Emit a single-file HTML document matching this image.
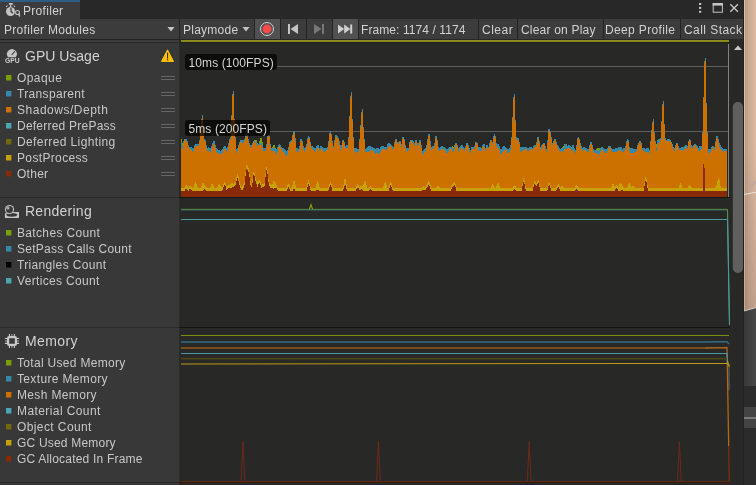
<!DOCTYPE html>
<html><head><meta charset="utf-8"><title>Profiler</title>
<style>
html,body{margin:0;padding:0;}
body{width:756px;height:485px;overflow:hidden;background:#383838;position:relative;font-family:"Liberation Sans",sans-serif;font-size:12px;color:#d2d2d2;}
div,span{position:absolute;box-sizing:border-box;white-space:nowrap;}
.t{line-height:14px;height:14px;}
#tabbar{left:0;top:0;width:744px;height:19px;background:#282828;}
#tab{left:0;top:0;width:80px;height:19px;background:#3c3c3c;border-top:2px solid #2c5d87;}
#toolbar{left:0;top:19px;width:744px;height:20px;background:#3c3c3c;}
.sep{top:19px;width:1px;height:20px;background:#232323;}
.hl{top:19px;height:20px;background:#515151;}
#left{left:0;top:40px;width:179px;height:445px;background:#383838;}
#chart{left:179px;top:39px;width:565px;height:446px;background:#282827;}
.lg{left:16.5px;color:#c8c8c8;}
.sqs{position:absolute;left:6px;width:7px;height:7px;}
.hd{left:25px;font-size:14px;line-height:16px;height:16px;color:#d2d2d2;}
.grip{left:161px;width:14px;height:4px;border-top:1px solid #646464;border-bottom:1px solid #646464;}
.lab{background:rgba(0,0,0,0.7);border-radius:3px;color:#d4d4d4;font-size:12px;line-height:19px;height:16px;padding:0 3.5px;letter-spacing:0.1px;overflow:hidden;}
#strip{left:744px;top:0;width:12px;height:485px;background:#d9b39c;}
span,svg{will-change:transform;}
</style></head><body>
<div id="tabbar"></div>
<div id="tab"></div>
<span class="t" style="left:23px;top:4px;letter-spacing:0.3px;">Profiler</span>
<svg style="position:absolute;left:5px;top:2px" width="17" height="16" viewBox="0 0 17 16">
 <circle cx="5.55" cy="9.45" r="4.55" fill="#c4c4c4"/>
 <rect x="3.85" y="1.1" width="4.1" height="1.7" rx="0.4" fill="#c4c4c4"/>
 <rect x="4.9" y="2.6" width="1.4" height="2.6" fill="#c4c4c4"/>
 <path d="M1.2 4.9L2.5 3.5M8.7 3.5L10 4.9" stroke="#c4c4c4" stroke-width="1.1"/>
 <path d="M5.9 5.6L6.1 9.4L7.7 11.2" stroke="#3c3c3c" stroke-width="1.3" fill="none"/>
 <circle cx="12.5" cy="10.5" r="2.8" fill="#3c3c3c"/>
 <path d="M13.8 12L14.7 14.4" stroke="#c4c4c4" stroke-width="1.5"/>
 <circle cx="12.5" cy="10.5" r="2" fill="#3c3c3c" stroke="#c4c4c4" stroke-width="1.1"/>
</svg>
<div id="toolbar"></div>
<div class="hl" style="left:255px;width:25px;"></div>
<div class="hl" style="left:333px;width:25px;"></div>
<span class="t" style="left:4px;top:23px;letter-spacing:0.3px;">Profiler Modules</span>
<svg style="position:absolute;left:167px;top:27px" width="9" height="5"><path d="M0.5 0h7L4 4.5z" fill="#c4c4c4"/></svg>
<div class="sep" style="left:179px;"></div>
<span class="t" style="left:182.6px;top:23px;letter-spacing:0.25px;">Playmode</span>
<svg style="position:absolute;left:242px;top:27px" width="9" height="5"><path d="M0.5 0h7L4 4.5z" fill="#c4c4c4"/></svg>
<div class="sep" style="left:254px;"></div>
<svg style="position:absolute;left:259px;top:21px" width="16" height="16"><circle cx="8" cy="8" r="6.5" fill="none" stroke="#d0d0d0" stroke-width="1"/><circle cx="8" cy="8" r="4.4" fill="#ff4848"/></svg>
<div class="sep" style="left:280px;"></div>
<svg style="position:absolute;left:287px;top:24px" width="12" height="10"><rect x="1" y="0" width="2" height="10" fill="#c4c4c4"/><path d="M11 0v10L3.5 5z" fill="#c4c4c4"/></svg>
<div class="sep" style="left:306px;"></div>
<svg style="position:absolute;left:313px;top:24px" width="12" height="10"><rect x="9" y="0" width="2" height="10" fill="#777"/><path d="M1 0v10L8.5 5z" fill="#777"/></svg>
<div class="sep" style="left:332px;"></div>
<svg style="position:absolute;left:338px;top:24px" width="16" height="10"><path d="M0 0.5v9L6.2 5z" fill="#d0d0d0"/><path d="M6.2 0.5v9L12.4 5z" fill="#d0d0d0"/><rect x="12.2" y="0.5" width="2" height="9" fill="#d0d0d0"/></svg>
<div class="sep" style="left:358px;"></div>
<span class="t" style="left:361px;top:23px;letter-spacing:0.08px;">Frame: 1174 / 1174</span>
<div class="sep" style="left:478px;"></div>
<span class="t" style="left:482px;top:23px;letter-spacing:0.5px;">Clear</span>
<div class="sep" style="left:517px;"></div>
<span class="t" style="left:520.5px;top:23px;letter-spacing:0.2px;">Clear on Play</span>
<div class="sep" style="left:603px;"></div>
<span class="t" style="left:605px;top:23px;letter-spacing:0.35px;">Deep Profile</span>
<div class="sep" style="left:680px;"></div>
<span class="t" style="left:684px;top:23px;letter-spacing:0.45px;width:60px;overflow:hidden;">Call Stacks</span>
<!-- window controls -->
<svg style="position:absolute;left:696px;top:0px" width="48" height="16">
 <rect x="3" y="3" width="2.2" height="2" fill="#c4c4c4"/><rect x="3" y="6.9" width="2.2" height="2" fill="#c4c4c4"/><rect x="3" y="10.8" width="2.2" height="2" fill="#c4c4c4"/>
 <rect x="17.2" y="3.5" width="9.2" height="8.7" fill="none" stroke="#c4c4c4" stroke-width="1"/><rect x="16.7" y="3" width="10.2" height="2.6" fill="#c4c4c4"/>
 <path d="M34.3 4.2l7.6 7.6M41.9 4.2l-7.6 7.6" stroke="#c4c4c4" stroke-width="1.4"/>
</svg>

<div id="left"></div>
<div style="left:0;top:39px;width:744px;height:1px;background:#232323;"></div>
<div style="left:0;top:40px;width:179px;height:2px;background:#3c3c3c;"></div>
<div style="left:0;top:42px;width:179px;height:1px;background:#2a2a2a;"></div>
<div style="left:0;top:197px;width:179px;height:1px;background:#2a2a2a;"></div>
<div style="left:0;top:327px;width:179px;height:1px;background:#2a2a2a;"></div>
<div style="left:0;top:482px;width:179px;height:1px;background:#2a2a2a;"></div>

<!-- GPU module -->
<svg style="position:absolute;left:5px;top:47px" width="17" height="17" viewBox="0 0 17 17">
 <path d="M3 10.2A4.9 4.9 0 1 1 10.8 10.2z" fill="#c4c4c4"/>
 <path d="M6.6 8L9.9 4.4" stroke="#383838" stroke-width="1.1"/>
 <text x="0" y="15.9" font-family="Liberation Sans, sans-serif" font-weight="bold" font-size="6.9" fill="#cfcfcf" textLength="14.6" lengthAdjust="spacingAndGlyphs">GPU</text>
</svg>
<span class="hd" style="top:48px;">GPU Usage</span>
<svg style="position:absolute;left:160px;top:48px" width="15" height="15" viewBox="0 0 15 15"><path d="M7.5 1.8L13.6 13.5H1.4z" fill="#ffc107" stroke="#ffc107" stroke-width="0.9" stroke-linejoin="round"/><rect x="7" y="4.6" width="1.1" height="6" fill="#33301c"/><rect x="6.9" y="11.2" width="1.3" height="1.2" fill="#33301c"/></svg>
<svg class="sqs" style="top:75px;"><rect x="0" y="0" width="5.4" height="5.5" fill="#7b9e06"/></svg><span class="t lg" style="top:71px;letter-spacing:0.42px;">Opaque</span><div class="grip" style="top:76px;"></div>
<svg class="sqs" style="top:91px;"><rect x="0" y="0" width="5.4" height="5.5" fill="#3588a7"/></svg><span class="t lg" style="top:87px;letter-spacing:0.33px;">Transparent</span><div class="grip" style="top:92px;"></div>
<svg class="sqs" style="top:107px;"><rect x="0" y="0" width="5.4" height="5.5" fill="#cc7100"/></svg><span class="t lg" style="top:103px;letter-spacing:0.51px;">Shadows/Depth</span><div class="grip" style="top:108px;"></div>
<svg class="sqs" style="top:123px;"><rect x="0" y="0" width="5.4" height="5.5" fill="#4ca5b2"/></svg><span class="t lg" style="top:119px;letter-spacing:0.23px;">Deferred PrePass</span><div class="grip" style="top:124px;"></div>
<svg class="sqs" style="top:139px;"><rect x="0" y="0" width="5.4" height="5.5" fill="#72680d"/></svg><span class="t lg" style="top:135px;letter-spacing:0.39px;">Deferred Lighting</span><div class="grip" style="top:140px;"></div>
<svg class="sqs" style="top:155px;"><rect x="0" y="0" width="5.4" height="5.5" fill="#c6a206"/></svg><span class="t lg" style="top:151px;letter-spacing:0.35px;">PostProcess</span><div class="grip" style="top:156px;"></div>
<svg class="sqs" style="top:171px;"><rect x="0" y="0" width="5.4" height="5.5" fill="#882907"/></svg><span class="t lg" style="top:167px;letter-spacing:0.27px;">Other</span><div class="grip" style="top:172px;"></div>

<!-- Rendering module -->
<svg style="position:absolute;left:4px;top:204px" width="17" height="17" viewBox="0 0 17 17">
 <path d="M0.9 9.2h6V8h8.1v5.4q0 .5-.5.5H1.4q-.5 0-.5-.5z" fill="#c4c4c4"/>
 <ellipse cx="7.8" cy="10.8" rx="5.4" ry="1.9" fill="#383838"/>
 <circle cx="5.5" cy="5.5" r="4.6" fill="#c4c4c4"/>
 <circle cx="5.5" cy="5.5" r="3.5" fill="#3a3a3a"/>
 <circle cx="4" cy="4.1" r="1.5" fill="#b0b0b0"/>
</svg>
<span class="hd" style="top:203px;letter-spacing:0.26px;">Rendering</span>
<svg class="sqs" style="top:230px;"><rect x="0" y="0" width="5.4" height="5.5" fill="#7b9e06"/></svg><span class="t lg" style="top:226px;letter-spacing:0.34px;">Batches Count</span>
<svg class="sqs" style="top:246px;"><rect x="0" y="0" width="5.4" height="5.5" fill="#3588a7"/></svg><span class="t lg" style="top:242px;letter-spacing:0.25px;">SetPass Calls Count</span>
<svg class="sqs" style="top:262px;"><rect x="0" y="0" width="5.4" height="5.5" fill="#000000"/></svg><span class="t lg" style="top:258px;letter-spacing:0.34px;">Triangles Count</span>
<svg class="sqs" style="top:278px;"><rect x="0" y="0" width="5.4" height="5.5" fill="#4ca5b2"/></svg><span class="t lg" style="top:274px;letter-spacing:0.33px;">Vertices Count</span>

<!-- Memory module -->
<svg style="position:absolute;left:4px;top:333px" width="17" height="17" viewBox="0 0 17 17">
 <rect x="4.1" y="4.1" width="7.8" height="7.8" rx="1" fill="none" stroke="#c8c8c8" stroke-width="2.2"/>
 <path d="M5.45 1v2.2M10.4 1v2.2M5.45 12.8v2.2M10.4 12.8v2.2M0.9 5.5h2.2M0.9 10.4h2.2M12.9 5.5h2.2M12.9 10.4h2.2" stroke="#c8c8c8" stroke-width="1.1"/>
 <path d="M7.9 1.1v2M7.9 12.9v2M1 7.9h2M13 7.9h2" stroke="#858585" stroke-width="1.5"/>
</svg>
<span class="hd" style="top:333px;letter-spacing:0.4px;">Memory</span>
<svg class="sqs" style="top:360px;"><rect x="0" y="0" width="5.4" height="5.5" fill="#7b9e06"/></svg><span class="t lg" style="top:356px;letter-spacing:0.31px;">Total Used Memory</span>
<svg class="sqs" style="top:376px;"><rect x="0" y="0" width="5.4" height="5.5" fill="#3588a7"/></svg><span class="t lg" style="top:372px;letter-spacing:0.35px;">Texture Memory</span>
<svg class="sqs" style="top:392px;"><rect x="0" y="0" width="5.4" height="5.5" fill="#cc7100"/></svg><span class="t lg" style="top:388px;letter-spacing:0.35px;">Mesh Memory</span>
<svg class="sqs" style="top:408px;"><rect x="0" y="0" width="5.4" height="5.5" fill="#4ca5b2"/></svg><span class="t lg" style="top:404px;letter-spacing:0.41px;">Material Count</span>
<svg class="sqs" style="top:424px;"><rect x="0" y="0" width="5.4" height="5.5" fill="#72680d"/></svg><span class="t lg" style="top:420px;letter-spacing:0.4px;">Object Count</span>
<svg class="sqs" style="top:440px;"><rect x="0" y="0" width="5.4" height="5.5" fill="#c6a206"/></svg><span class="t lg" style="top:436px;letter-spacing:0.2px;">GC Used Memory</span>
<svg class="sqs" style="top:456px;"><rect x="0" y="0" width="5.4" height="5.5" fill="#882907"/></svg><span class="t lg" style="top:452px;letter-spacing:0.2px;">GC Allocated In Frame</span>

<div id="chart"></div>
<svg style="position:absolute;left:0;top:0" width="756" height="485" shape-rendering="crispEdges">
 <rect x="179" y="39" width="1" height="446" fill="#2b2b2a"/>
 <rect x="181" y="40" width="548" height="2" fill="#8c8c1c"/>
 <rect x="180" y="42" width="550" height="1" fill="#1e1e1e"/>
 <rect x="277" y="66" width="452" height="1" fill="#5e5e5e"/>
 <rect x="270" y="131" width="459" height="1" fill="#5e5e5e"/>
<polygon fill="#7b9e06" points="181,197 181,139.3 182,139.3 182,143.3 183,143.3 183,140.8 184,140.8 184,138.5 185,138.5 185,138.6 186,138.6 186,139.4 187,139.4 187,141 188,141 188,144.8 189,144.8 189,146.8 190,146.8 190,146.8 191,146.8 191,147.3 192,147.3 192,148.3 193,148.3 193,147.9 194,147.9 194,145 195,145 195,143.9 196,143.9 196,143.8 197,143.8 197,143.8 198,143.8 198,144.3 199,144.3 199,140.3 200,140.3 200,128.5 201,128.5 201,118.9 202,118.9 202,115.4 203,115.4 203,130.5 204,130.5 204,138.9 205,138.9 205,139.7 206,139.7 206,145 207,145 207,147.5 208,147.5 208,147.4 209,147.4 209,147.9 210,147.9 210,148.1 211,148.1 211,146.1 212,146.1 212,142.7 213,142.7 213,140.8 214,140.8 214,140.8 215,140.8 215,144.7 216,144.7 216,148.4 217,148.4 217,149 218,149 218,149.6 219,149.6 219,150.2 220,150.2 220,150.7 221,150.7 221,150.2 222,150.2 222,148.7 223,148.7 223,146.6 224,146.6 224,145.6 225,145.6 225,145.6 226,145.6 226,147.9 227,147.9 227,147.1 228,147.1 228,143.1 229,143.1 229,138.9 230,138.9 230,136.9 231,136.9 231,115 232,115 232,94.4 233,94.4 233,90.9 234,90.9 234,118.7 235,118.7 235,136.9 236,136.9 236,148.6 237,148.6 237,147.6 238,147.6 238,144.8 239,144.8 239,142.3 240,142.3 240,140 241,140 241,139.9 242,139.9 242,139.8 243,139.8 243,139.8 244,139.8 244,139.2 245,139.2 245,135.3 246,135.3 246,133.9 247,133.9 247,134.5 248,134.5 248,139.3 249,139.3 249,143.1 250,143.1 250,144.8 251,144.8 251,144.8 252,144.8 252,142.5 253,142.5 253,140.7 254,140.7 254,139.9 255,139.9 255,139.5 256,139.5 256,139.5 257,139.5 257,143.3 258,143.3 258,143.7 259,143.7 259,141 260,141 260,138.3 261,138.3 261,138.3 262,138.3 262,141.6 263,141.6 263,147.7 264,147.7 264,148 265,148 265,148 266,148 266,143.9 267,143.9 267,135.6 268,135.6 268,133.6 269,133.6 269,135.6 270,135.6 270,143.8 271,143.8 271,148 272,148 272,146.5 273,146.5 273,145.4 274,145.4 274,145.4 275,145.4 275,147.7 276,147.7 276,149.1 277,149.1 277,147.1 278,147.1 278,144.6 279,144.6 279,144.1 280,144.1 280,144.7 281,144.7 281,146.5 282,146.5 282,147.7 283,147.7 283,148.4 284,148.4 284,149.3 285,149.3 285,150.2 286,150.2 286,151 287,151 287,150.1 288,150.1 288,146.7 289,146.7 289,142.4 290,142.4 290,141.1 291,141.1 291,139.9 292,139.9 292,135 293,135 293,131.3 294,131.3 294,131.3 295,131.3 295,138.3 296,138.3 296,147.8 297,147.8 297,148.4 298,148.4 298,148.6 299,148.6 299,145.6 300,145.6 300,139.3 301,139.3 301,139 302,139 302,141.2 303,141.2 303,146.2 304,146.2 304,148.4 305,148.4 305,147 306,147 306,143.5 307,143.5 307,137.9 308,137.9 308,136 309,136 309,136.9 310,136.9 310,142.4 311,142.4 311,146.1 312,146.1 312,146.1 313,146.1 313,146.8 314,146.8 314,148.2 315,148.2 315,147.8 316,147.8 316,146.1 317,146.1 317,145.3 318,145.3 318,145.4 319,145.4 319,147.5 320,147.5 320,146.2 321,146.2 321,146 322,146 322,146.7 323,146.7 323,148.3 324,148.3 324,147.9 325,147.9 325,147.9 326,147.9 326,147.5 327,147.5 327,146.5 328,146.5 328,141.2 329,141.2 329,133.1 330,133.1 330,131.4 331,131.4 331,133.6 332,133.6 332,141.1 333,141.1 333,146 334,146 334,140.1 335,140.1 335,135.1 336,135.1 336,135.1 337,135.1 337,136.3 338,136.3 338,137.8 339,137.8 339,141.3 340,141.3 340,144.6 341,144.6 341,144.9 342,144.9 342,140.1 343,140.1 343,140.1 344,140.1 344,142 345,142 345,145.6 346,145.6 346,145 347,145 347,145 348,145 348,137.1 349,137.1 349,115.8 350,115.8 350,95.9 351,95.9 351,92.4 352,92.4 352,119.4 353,119.4 353,137.1 354,137.1 354,148 355,148 355,148.1 356,148.1 356,148.2 357,148.2 357,148.6 358,148.6 358,149.2 359,149.2 359,139.4 360,139.4 360,124.9 361,124.9 361,112.4 362,112.4 362,108.9 363,108.9 363,127.4 364,127.4 364,139.4 365,139.4 365,148.9 366,148.9 366,148.3 367,148.3 367,146.7 368,146.7 368,146 369,146 369,146 370,146 370,146.4 371,146.4 371,146.8 372,146.8 372,147.1 373,147.1 373,147.6 374,147.6 374,148.3 375,148.3 375,148.9 376,148.9 376,148.3 377,148.3 377,147.7 378,147.7 378,147.7 379,147.7 379,148.8 380,148.8 380,146.9 381,146.9 381,146.4 382,146.4 382,146.3 383,146.3 383,146.3 384,146.3 384,146.5 385,146.5 385,147.1 386,147.1 386,147.1 387,147.1 387,144.3 388,144.3 388,142.8 389,142.8 389,142.8 390,142.8 390,143.9 391,143.9 391,145 392,145 392,146.2 393,146.2 393,146.8 394,146.8 394,142.3 395,142.3 395,138.5 396,138.5 396,138.5 397,138.5 397,141.5 398,141.5 398,142.3 399,142.3 399,140.7 400,140.7 400,140.8 401,140.8 401,144 402,144 402,137.3 403,137.3 403,136.5 404,136.5 404,138.8 405,138.8 405,144.9 406,144.9 406,147.9 407,147.9 407,148.4 408,148.4 408,147.5 409,147.5 409,142 410,142 410,139.7 411,139.7 411,139.7 412,139.7 412,140.1 413,140.1 413,141.1 414,141.1 414,142.7 415,142.7 415,139.5 416,139.5 416,139.5 417,139.5 417,142.9 418,142.9 418,142.5 419,142.5 419,139.5 420,139.5 420,139.5 421,139.5 421,145.4 422,145.4 422,150.6 423,150.6 423,149.9 424,149.9 424,148.6 425,148.6 425,147.5 426,147.5 426,145.4 427,145.4 427,138.7 428,138.7 428,134.4 429,134.4 429,134.4 430,134.4 430,141.4 431,141.4 431,146.5 432,146.5 432,145.9 433,145.9 433,146.4 434,146.4 434,143.2 435,143.2 435,136.3 436,136.3 436,136.3 437,136.3 437,140.2 438,140.2 438,147 439,147 439,148.2 440,148.2 440,146.9 441,146.9 441,146.4 442,146.4 442,146.4 443,146.4 443,146.6 444,146.6 444,147.1 445,147.1 445,148.4 446,148.4 446,149.4 447,149.4 447,149.1 448,149.1 448,148.2 449,148.2 449,147.4 450,147.4 450,146.8 451,146.8 451,146.5 452,146.5 452,146.4 453,146.4 453,146.5 454,146.5 454,145.3 455,145.3 455,142.7 456,142.7 456,142.7 457,142.7 457,144.6 458,144.6 458,148.2 459,148.2 459,147.3 460,147.3 460,145.9 461,145.9 461,145.3 462,145.3 462,145.4 463,145.4 463,146.6 464,146.6 464,147.6 465,147.6 465,145.8 466,145.8 466,143.4 467,143.4 467,143.4 468,143.4 468,145.1 469,145.1 469,148.2 470,148.2 470,149.5 471,149.5 471,147.4 472,147.4 472,146.6 473,146.6 473,146.7 474,146.7 474,145.9 475,145.9 475,141.7 476,141.7 476,141.6 477,141.6 477,143.3 478,143.3 478,146.9 479,146.9 479,146.7 480,146.7 480,146.7 481,146.7 481,148.1 482,148.1 482,144.7 483,144.7 483,143.6 484,143.6 484,144.2 485,144.2 485,147.7 486,147.7 486,145.1 487,145.1 487,145.1 488,145.1 488,146.5 489,146.5 489,143 490,143 490,139.6 491,139.6 491,139.6 492,139.6 492,142.2 493,142.2 493,135.7 494,135.7 494,133.9 495,133.9 495,135.7 496,135.7 496,143.1 497,143.1 497,144.4 498,144.4 498,144.4 499,144.4 499,145.9 500,145.9 500,148.5 501,148.5 501,149 502,149 502,146.9 503,146.9 503,146.1 504,146.1 504,146.2 505,146.2 505,146.9 506,146.9 506,147.8 507,147.8 507,149.1 508,149.1 508,149.4 509,149.4 509,147.6 510,147.6 510,145.4 511,145.4 511,137.3 512,137.3 512,116.6 513,116.6 513,97.4 514,97.4 514,93.9 515,93.9 515,120.2 516,120.2 516,137.3 517,137.3 517,138.4 518,138.4 518,138.4 519,138.4 519,141.5 520,141.5 520,147.2 521,147.2 521,146.7 522,146.7 522,146.7 523,146.7 523,147 524,147 524,146.7 525,146.7 525,146.6 526,146.6 526,146.8 527,146.8 527,147.8 528,147.8 528,147.9 529,147.9 529,147.3 530,147.3 530,146.8 531,146.8 531,146.8 532,146.8 532,147.6 533,147.6 533,145.5 534,145.5 534,144.7 535,144.7 535,144.8 536,144.8 536,142.4 537,142.4 537,137.4 538,137.4 538,137.4 539,137.4 539,140.5 540,140.5 540,146.6 541,146.6 541,145.3 542,145.3 542,143.7 543,143.7 543,142.9 544,142.9 544,143 545,143 545,146.2 546,146.2 546,148.9 547,148.9 547,139.7 548,139.7 548,129 549,129 549,129 550,129 550,132 551,132 551,137.4 552,137.4 552,142.8 553,142.8 553,141.1 554,141.1 554,138.9 555,138.9 555,139.1 556,139.1 556,142.3 557,142.3 557,145 558,145 558,146.3 559,146.3 559,147.8 560,147.8 560,148.8 561,148.8 561,147.8 562,147.8 562,146.9 563,146.9 563,145.7 564,145.7 564,144.2 565,144.2 565,143.7 566,143.7 566,143.9 567,143.9 567,145.5 568,145.5 568,145.4 569,145.4 569,145.4 570,145.4 570,146.4 571,146.4 571,146.6 572,146.6 572,145.4 573,145.4 573,145.4 574,145.4 574,147.6 575,147.6 575,150 576,150 576,144.8 577,144.8 577,137.6 578,137.6 578,136.8 579,136.8 579,138.5 580,138.5 580,143 581,143 581,146.3 582,146.3 582,147.9 583,147.9 583,147.3 584,147.3 584,147.3 585,147.3 585,147.7 586,147.7 586,148.2 587,148.2 587,148.9 588,148.9 588,148.6 589,148.6 589,145.3 590,145.3 590,142.3 591,142.3 591,142.3 592,142.3 592,144.8 593,144.8 593,148.8 594,148.8 594,149.8 595,149.8 595,150 596,150 596,149.3 597,149.3 597,148 598,148 598,147.8 599,147.8 599,148.2 600,148.2 600,148.1 601,148.1 601,146.5 602,146.5 602,146.5 603,146.5 603,147.6 604,147.6 604,149.2 605,149.2 605,149.4 606,149.4 606,149.1 607,149.1 607,147.7 608,147.7 608,145.8 609,145.8 609,145.6 610,145.6 610,146.2 611,146.2 611,147.7 612,147.7 612,148.5 613,148.5 613,148.8 614,148.8 614,148.9 615,148.9 615,148.2 616,148.2 616,147.9 617,147.9 617,147.9 618,147.9 618,147.4 619,147.4 619,146.6 620,146.6 620,146.6 621,146.6 621,147.4 622,147.4 622,148.8 623,148.8 623,148.3 624,148.3 624,148.3 625,148.3 625,145.7 626,145.7 626,140.5 627,140.5 627,138.9 628,138.9 628,140.1 629,140.1 629,146.8 630,146.8 630,147.8 631,147.8 631,147.8 632,147.8 632,148.4 633,148.4 633,149.4 634,149.4 634,149.2 635,149.2 635,149.2 636,149.2 636,148.5 637,148.5 637,145 638,145 638,142.8 639,142.8 639,141.2 640,141.2 640,141 641,141 641,142.9 642,142.9 642,147.5 643,147.5 643,148.2 644,148.2 644,148.2 645,148.2 645,148.5 646,148.5 646,148 647,148 647,147.8 648,147.8 648,148 649,148 649,149.8 650,149.8 650,140.8 651,140.8 651,130.4 652,130.4 652,122.4 653,122.4 653,118.9 654,118.9 654,132.2 655,132.2 655,140.8 656,140.8 656,144.3 657,144.3 657,140.2 658,140.2 658,139 659,139 659,139.2 660,139.2 660,138.3 661,138.3 661,120.5 662,120.5 662,104.4 663,104.4 663,100.9 664,100.9 664,123.5 665,123.5 665,138.3 666,138.3 666,139.5 667,139.5 667,139.4 668,139.4 668,139.3 669,139.3 669,139.2 670,139.2 670,139.7 671,139.7 671,141.7 672,141.7 672,144.2 673,144.2 673,147.3 674,147.3 674,147.6 675,147.6 675,144.7 676,144.7 676,143.2 677,143.2 677,143.2 678,143.2 678,145.5 679,145.5 679,147.6 680,147.6 680,147.5 681,147.5 681,147.1 682,147.1 682,147.1 683,147.1 683,147.2 684,147.2 684,146.1 685,146.1 685,145.4 686,145.4 686,145.4 687,145.4 687,146.2 688,146.2 688,140.6 689,140.6 689,139 690,139 690,140 691,140 691,145.1 692,145.1 692,146.1 693,146.1 693,144.8 694,144.8 694,143.7 695,143.7 695,143.7 696,143.7 696,144.8 697,144.8 697,146.2 698,146.2 698,147.5 699,147.5 699,146.4 700,146.4 700,146.1 701,146.1 701,146.1 702,146.1 702,132.3 703,132.3 703,96.8 704,96.8 704,61.4 705,61.4 705,57.9 706,57.9 706,102.9 707,102.9 707,132.3 708,132.3 708,149.3 709,149.3 709,149.2 710,149.2 710,149 711,149 711,147.4 712,147.4 712,145.6 713,145.6 713,145.6 714,145.6 714,146.6 715,146.6 715,140.6 716,140.6 716,136.1 717,136.1 717,136.1 718,136.1 718,139.3 719,139.3 719,142.9 720,142.9 720,144.9 721,144.9 721,146.8 722,146.8 722,148.2 723,148.2 723,148.7 724,148.7 724,148.6 725,148.6 725,148.5 726,148.5 726,148.5 727,148.5 727,197"/>
<polygon fill="#3588a7" points="181,197 181,143 182,143 182,145.5 183,145.5 183,140.8 184,140.8 184,138.5 185,138.5 185,138.6 186,138.6 186,139.4 187,139.4 187,141 188,141 188,144.8 189,144.8 189,146.8 190,146.8 190,146.8 191,146.8 191,147.3 192,147.3 192,148.3 193,148.3 193,147.9 194,147.9 194,145 195,145 195,143.9 196,143.9 196,143.8 197,143.8 197,143.8 198,143.8 198,144.3 199,144.3 199,140.3 200,140.3 200,128.5 201,128.5 201,118.9 202,118.9 202,115.4 203,115.4 203,130.5 204,130.5 204,138.9 205,138.9 205,139.7 206,139.7 206,145 207,145 207,147.5 208,147.5 208,147.4 209,147.4 209,147.9 210,147.9 210,148.1 211,148.1 211,146.1 212,146.1 212,142.7 213,142.7 213,140.8 214,140.8 214,140.8 215,140.8 215,144.7 216,144.7 216,148.4 217,148.4 217,149 218,149 218,149.6 219,149.6 219,150.2 220,150.2 220,150.7 221,150.7 221,150.2 222,150.2 222,148.7 223,148.7 223,146.6 224,146.6 224,145.6 225,145.6 225,145.6 226,145.6 226,147.9 227,147.9 227,147.1 228,147.1 228,143.1 229,143.1 229,138.9 230,138.9 230,136.9 231,136.9 231,115 232,115 232,94.4 233,94.4 233,90.9 234,90.9 234,118.7 235,118.7 235,136.9 236,136.9 236,148.6 237,148.6 237,147.6 238,147.6 238,144.8 239,144.8 239,142.3 240,142.3 240,140 241,140 241,139.9 242,139.9 242,139.8 243,139.8 243,139.8 244,139.8 244,139.2 245,139.2 245,135.3 246,135.3 246,133.9 247,133.9 247,134.5 248,134.5 248,139.3 249,139.3 249,143.1 250,143.1 250,144.8 251,144.8 251,144.8 252,144.8 252,142.5 253,142.5 253,141 254,141 254,141 255,141 255,141.5 256,141.5 256,142.1 257,142.1 257,144.4 258,144.4 258,143.7 259,143.7 259,143 260,143 260,142.5 261,142.5 261,142.5 262,142.5 262,144.5 263,144.5 263,148.3 264,148.3 264,148 265,148 265,148 266,148 266,143.9 267,143.9 267,135.6 268,135.6 268,133.6 269,133.6 269,135.6 270,135.6 270,143.8 271,143.8 271,148.1 272,148.1 272,147.8 273,147.8 273,147.7 274,147.7 274,147.7 275,147.7 275,148.9 276,148.9 276,149.1 277,149.1 277,147.1 278,147.1 278,144.6 279,144.6 279,144.1 280,144.1 280,144.7 281,144.7 281,146.5 282,146.5 282,147.7 283,147.7 283,148.4 284,148.4 284,149.3 285,149.3 285,150.2 286,150.2 286,151 287,151 287,150.1 288,150.1 288,146.7 289,146.7 289,142.4 290,142.4 290,141.1 291,141.1 291,139.9 292,139.9 292,135 293,135 293,131.3 294,131.3 294,131.3 295,131.3 295,138.3 296,138.3 296,147.8 297,147.8 297,148.4 298,148.4 298,148.6 299,148.6 299,145.6 300,145.6 300,139.3 301,139.3 301,139 302,139 302,141.2 303,141.2 303,146.2 304,146.2 304,148.4 305,148.4 305,147 306,147 306,143.5 307,143.5 307,137.9 308,137.9 308,136 309,136 309,136.9 310,136.9 310,142.4 311,142.4 311,146.1 312,146.1 312,146.1 313,146.1 313,146.8 314,146.8 314,148.2 315,148.2 315,147.8 316,147.8 316,146.1 317,146.1 317,145.3 318,145.3 318,145.4 319,145.4 319,147.5 320,147.5 320,146.2 321,146.2 321,146 322,146 322,146.7 323,146.7 323,148.3 324,148.3 324,147.9 325,147.9 325,147.9 326,147.9 326,147.5 327,147.5 327,146.5 328,146.5 328,141.2 329,141.2 329,133.1 330,133.1 330,131.4 331,131.4 331,133.6 332,133.6 332,141.1 333,141.1 333,146 334,146 334,140.1 335,140.1 335,135.1 336,135.1 336,135.1 337,135.1 337,136.3 338,136.3 338,137.8 339,137.8 339,141.3 340,141.3 340,144.6 341,144.6 341,144.9 342,144.9 342,140.1 343,140.1 343,140.1 344,140.1 344,142 345,142 345,145.6 346,145.6 346,145 347,145 347,145 348,145 348,137.1 349,137.1 349,115.8 350,115.8 350,95.9 351,95.9 351,92.4 352,92.4 352,119.4 353,119.4 353,137.1 354,137.1 354,148 355,148 355,148.1 356,148.1 356,148.2 357,148.2 357,148.6 358,148.6 358,149.2 359,149.2 359,139.4 360,139.4 360,124.9 361,124.9 361,112.4 362,112.4 362,108.9 363,108.9 363,127.4 364,127.4 364,139.4 365,139.4 365,148.9 366,148.9 366,148.3 367,148.3 367,146.7 368,146.7 368,146 369,146 369,146 370,146 370,146.4 371,146.4 371,146.8 372,146.8 372,147.1 373,147.1 373,147.6 374,147.6 374,148.3 375,148.3 375,148.9 376,148.9 376,148.3 377,148.3 377,147.7 378,147.7 378,147.7 379,147.7 379,148.8 380,148.8 380,146.9 381,146.9 381,146.4 382,146.4 382,146.3 383,146.3 383,146.3 384,146.3 384,146.5 385,146.5 385,147.1 386,147.1 386,147.1 387,147.1 387,144.3 388,144.3 388,142.8 389,142.8 389,142.8 390,142.8 390,143.9 391,143.9 391,145 392,145 392,146.2 393,146.2 393,146.8 394,146.8 394,142.3 395,142.3 395,138.5 396,138.5 396,138.5 397,138.5 397,141.5 398,141.5 398,142.3 399,142.3 399,140.7 400,140.7 400,140.8 401,140.8 401,144 402,144 402,137.3 403,137.3 403,136.5 404,136.5 404,138.8 405,138.8 405,144.9 406,144.9 406,147.9 407,147.9 407,148.4 408,148.4 408,147.5 409,147.5 409,142 410,142 410,139.7 411,139.7 411,139.7 412,139.7 412,140.1 413,140.1 413,141.1 414,141.1 414,142.7 415,142.7 415,139.5 416,139.5 416,139.5 417,139.5 417,142.9 418,142.9 418,142.5 419,142.5 419,139.5 420,139.5 420,139.5 421,139.5 421,145.4 422,145.4 422,150.6 423,150.6 423,149.9 424,149.9 424,148.6 425,148.6 425,147.5 426,147.5 426,145.4 427,145.4 427,138.7 428,138.7 428,134.4 429,134.4 429,134.4 430,134.4 430,141.4 431,141.4 431,146.5 432,146.5 432,145.9 433,145.9 433,146.4 434,146.4 434,143.2 435,143.2 435,136.3 436,136.3 436,136.3 437,136.3 437,140.2 438,140.2 438,147 439,147 439,148.2 440,148.2 440,146.9 441,146.9 441,146.4 442,146.4 442,146.4 443,146.4 443,146.6 444,146.6 444,147.1 445,147.1 445,148.4 446,148.4 446,149.4 447,149.4 447,149.1 448,149.1 448,148.2 449,148.2 449,147.4 450,147.4 450,147 451,147 451,147 452,147 452,148.7 453,148.7 453,147.7 454,147.7 454,145.3 455,145.3 455,142.7 456,142.7 456,142.7 457,142.7 457,144.6 458,144.6 458,148.2 459,148.2 459,147.3 460,147.3 460,145.9 461,145.9 461,145.3 462,145.3 462,145.4 463,145.4 463,146.6 464,146.6 464,147.6 465,147.6 465,145.8 466,145.8 466,143.4 467,143.4 467,143.4 468,143.4 468,145.1 469,145.1 469,148.2 470,148.2 470,149.5 471,149.5 471,147.4 472,147.4 472,146.6 473,146.6 473,146.7 474,146.7 474,145.9 475,145.9 475,141.7 476,141.7 476,141.6 477,141.6 477,143.3 478,143.3 478,146.9 479,146.9 479,146.7 480,146.7 480,146.7 481,146.7 481,148.1 482,148.1 482,144.7 483,144.7 483,143.6 484,143.6 484,144.2 485,144.2 485,147.7 486,147.7 486,145.1 487,145.1 487,145.1 488,145.1 488,146.5 489,146.5 489,143 490,143 490,139.6 491,139.6 491,139.6 492,139.6 492,142.2 493,142.2 493,135.7 494,135.7 494,133.9 495,133.9 495,135.7 496,135.7 496,143.1 497,143.1 497,144.4 498,144.4 498,144.4 499,144.4 499,145.9 500,145.9 500,148.5 501,148.5 501,149 502,149 502,146.9 503,146.9 503,146.1 504,146.1 504,146.2 505,146.2 505,146.9 506,146.9 506,147.8 507,147.8 507,149.1 508,149.1 508,149.4 509,149.4 509,147.6 510,147.6 510,145.4 511,145.4 511,137.3 512,137.3 512,116.6 513,116.6 513,97.4 514,97.4 514,93.9 515,93.9 515,120.2 516,120.2 516,137.3 517,137.3 517,138.4 518,138.4 518,138.4 519,138.4 519,141.5 520,141.5 520,147.2 521,147.2 521,146.7 522,146.7 522,146.7 523,146.7 523,147 524,147 524,146.7 525,146.7 525,146.6 526,146.6 526,146.8 527,146.8 527,147.8 528,147.8 528,147.9 529,147.9 529,147.3 530,147.3 530,146.8 531,146.8 531,146.8 532,146.8 532,147.6 533,147.6 533,145.5 534,145.5 534,144.7 535,144.7 535,144.8 536,144.8 536,142.4 537,142.4 537,137.4 538,137.4 538,137.4 539,137.4 539,140.5 540,140.5 540,146.6 541,146.6 541,145.3 542,145.3 542,143.7 543,143.7 543,142.9 544,142.9 544,143 545,143 545,146.2 546,146.2 546,148.9 547,148.9 547,139.7 548,139.7 548,129 549,129 549,129 550,129 550,132 551,132 551,137.4 552,137.4 552,142.8 553,142.8 553,141.1 554,141.1 554,138.9 555,138.9 555,139.1 556,139.1 556,142.3 557,142.3 557,145 558,145 558,146.3 559,146.3 559,147.8 560,147.8 560,148.8 561,148.8 561,148 562,148 562,148 563,148 563,147.6 564,147.6 564,144.7 565,144.7 565,143.7 566,143.7 566,143.9 567,143.9 567,145.5 568,145.5 568,145.4 569,145.4 569,145.4 570,145.4 570,146.4 571,146.4 571,146.6 572,146.6 572,145.4 573,145.4 573,145.4 574,145.4 574,147.6 575,147.6 575,150 576,150 576,144.8 577,144.8 577,137.6 578,137.6 578,136.8 579,136.8 579,138.5 580,138.5 580,143 581,143 581,146.3 582,146.3 582,147.9 583,147.9 583,147.3 584,147.3 584,147.3 585,147.3 585,147.7 586,147.7 586,148.2 587,148.2 587,148.9 588,148.9 588,148.6 589,148.6 589,145.3 590,145.3 590,142.3 591,142.3 591,142.3 592,142.3 592,144.8 593,144.8 593,148.8 594,148.8 594,149.8 595,149.8 595,150 596,150 596,150.1 597,150.1 597,150.2 598,150.2 598,150.6 599,150.6 599,150 600,150 600,148.1 601,148.1 601,146.5 602,146.5 602,146.5 603,146.5 603,147.6 604,147.6 604,149.2 605,149.2 605,149.4 606,149.4 606,149.1 607,149.1 607,147.7 608,147.7 608,145.8 609,145.8 609,145.6 610,145.6 610,146.2 611,146.2 611,147.7 612,147.7 612,148.5 613,148.5 613,148.8 614,148.8 614,148.9 615,148.9 615,148.2 616,148.2 616,147.9 617,147.9 617,147.9 618,147.9 618,147.4 619,147.4 619,146.6 620,146.6 620,146.6 621,146.6 621,147.4 622,147.4 622,148.8 623,148.8 623,148.3 624,148.3 624,148.3 625,148.3 625,145.7 626,145.7 626,140.5 627,140.5 627,138.9 628,138.9 628,140.1 629,140.1 629,146.8 630,146.8 630,147.8 631,147.8 631,147.8 632,147.8 632,148.4 633,148.4 633,149.4 634,149.4 634,149.2 635,149.2 635,149.2 636,149.2 636,148.5 637,148.5 637,145 638,145 638,142.8 639,142.8 639,141.2 640,141.2 640,141 641,141 641,142.9 642,142.9 642,147.5 643,147.5 643,148.2 644,148.2 644,148.2 645,148.2 645,148.5 646,148.5 646,148 647,148 647,147.8 648,147.8 648,148 649,148 649,149.8 650,149.8 650,140.8 651,140.8 651,130.4 652,130.4 652,122.4 653,122.4 653,118.9 654,118.9 654,132.2 655,132.2 655,140.8 656,140.8 656,146.6 657,146.6 657,140.8 658,140.8 658,139 659,139 659,139.2 660,139.2 660,138.3 661,138.3 661,120.5 662,120.5 662,104.4 663,104.4 663,100.9 664,100.9 664,123.5 665,123.5 665,138.3 666,138.3 666,139.5 667,139.5 667,139.4 668,139.4 668,139.3 669,139.3 669,139.2 670,139.2 670,139.7 671,139.7 671,141.7 672,141.7 672,144.2 673,144.2 673,147.3 674,147.3 674,147.6 675,147.6 675,144.7 676,144.7 676,143.2 677,143.2 677,143.2 678,143.2 678,145.5 679,145.5 679,147.6 680,147.6 680,147.5 681,147.5 681,147.1 682,147.1 682,147.1 683,147.1 683,147.2 684,147.2 684,146.1 685,146.1 685,145.4 686,145.4 686,145.4 687,145.4 687,146.2 688,146.2 688,140.6 689,140.6 689,139 690,139 690,140 691,140 691,145.1 692,145.1 692,146.1 693,146.1 693,144.8 694,144.8 694,143.7 695,143.7 695,143.7 696,143.7 696,144.8 697,144.8 697,146.2 698,146.2 698,147.5 699,147.5 699,146.4 700,146.4 700,146.1 701,146.1 701,146.1 702,146.1 702,132.3 703,132.3 703,96.8 704,96.8 704,61.4 705,61.4 705,57.9 706,57.9 706,102.9 707,102.9 707,132.3 708,132.3 708,149.3 709,149.3 709,149.2 710,149.2 710,149 711,149 711,147.4 712,147.4 712,145.6 713,145.6 713,145.6 714,145.6 714,146.6 715,146.6 715,140.6 716,140.6 716,136.1 717,136.1 717,136.1 718,136.1 718,139.3 719,139.3 719,142.9 720,142.9 720,144.9 721,144.9 721,146.8 722,146.8 722,148.2 723,148.2 723,148.7 724,148.7 724,148.6 725,148.6 725,148.5 726,148.5 726,148.5 727,148.5 727,197"/>
<polygon fill="#cc7100" points="181,197 181,147.4 182,147.4 182,149.1 183,149.1 183,142.7 184,142.7 184,140.1 185,140.1 185,140.2 186,140.2 186,140.9 187,140.9 187,142.6 188,142.6 188,146.8 189,146.8 189,149.2 190,149.2 190,149.4 191,149.4 191,150.4 192,150.4 192,151.9 193,151.9 193,151 194,151 194,147.5 195,147.5 195,146.1 196,146.1 196,145.8 197,145.8 197,145.8 198,145.8 198,146.3 199,146.3 199,141.9 200,141.9 200,130.1 201,130.1 201,120.5 202,120.5 202,117 203,117 203,132.1 204,132.1 204,140.5 205,140.5 205,140.9 206,140.9 206,147.9 207,147.9 207,150.9 208,150.9 208,150.8 209,150.8 209,151.5 210,151.5 210,151.5 211,151.5 211,149.1 212,149.1 212,145.9 213,145.9 213,144 214,144 214,144 215,144 215,148 216,148 216,151.8 217,151.8 217,152.5 218,152.5 218,153.2 219,153.2 219,153.6 220,153.6 220,154.3 221,154.3 221,154.4 222,154.4 222,152.6 223,152.6 223,149.9 224,149.9 224,148.6 225,148.6 225,148.6 226,148.6 226,151.8 227,151.8 227,150.1 228,150.1 228,145.5 229,145.5 229,140.8 230,140.8 230,138.5 231,138.5 231,116.6 232,116.6 232,96 233,96 233,92.5 234,92.5 234,120.3 235,120.3 235,138.5 236,138.5 236,153.4 237,153.4 237,150.8 238,150.8 238,146.9 239,146.9 239,144.4 240,144.4 240,142.2 241,142.2 241,142.2 242,142.2 242,142.7 243,142.7 243,143 244,143 244,141 245,141 245,137.4 246,137.4 246,136 247,136 247,136.6 248,136.6 248,141.4 249,141.4 249,145.2 250,145.2 250,147.1 251,147.1 251,146.6 252,146.6 252,144 253,144 253,142.3 254,142.3 254,142.3 255,142.3 255,143 256,143 256,143.8 257,143.8 257,146.1 258,146.1 258,145 259,145 259,144.6 260,144.6 260,144.5 261,144.5 261,144.5 262,144.5 262,147.2 263,147.2 263,151.4 264,151.4 264,150.5 265,150.5 265,150.5 266,150.5 266,146.8 267,146.8 267,137.3 268,137.3 268,135 269,135 269,137.3 270,137.3 270,146.2 271,146.2 271,150.9 272,150.9 272,150.9 273,150.9 273,151.1 274,151.1 274,151.3 275,151.3 275,152.9 276,152.9 276,154.5 277,154.5 277,151.5 278,151.5 278,146.9 279,146.9 279,146.1 280,146.1 280,146.9 281,146.9 281,149.4 282,149.4 282,151 283,151 283,151.7 284,151.7 284,153.1 285,153.1 285,154.9 286,154.9 286,155.6 287,155.6 287,154.7 288,154.7 288,150 289,150 289,143.7 290,143.7 290,142.4 291,142.4 291,141.6 292,141.6 292,136.4 293,136.4 293,132.5 294,132.5 294,132.5 295,132.5 295,140.5 296,140.5 296,151.3 297,151.3 297,152.1 298,152.1 298,152.2 299,152.2 299,148.5 300,148.5 300,141.3 301,141.3 301,141 302,141 302,143.4 303,143.4 303,148.8 304,148.8 304,151.6 305,151.6 305,149.5 306,149.5 306,145.5 307,145.5 307,139.9 308,139.9 308,138 309,138 309,138.8 310,138.8 310,144.2 311,144.2 311,148.1 312,148.1 312,149.1 313,149.1 313,150.3 314,150.3 314,151.8 315,151.8 315,151.3 316,151.3 316,148.9 317,148.9 317,147.8 318,147.8 318,147.9 319,147.9 319,150.8 320,150.8 320,149.3 321,149.3 321,149.1 322,149.1 322,150 323,150 323,152.3 324,152.3 324,152 325,152 325,151.2 326,151.2 326,150.3 327,150.3 327,149.2 328,149.2 328,143.3 329,143.3 329,134.4 330,134.4 330,132.5 331,132.5 331,134.8 332,134.8 332,142.8 333,142.8 333,148.2 334,148.2 334,142 335,142 335,136.5 336,136.5 336,136.5 337,136.5 337,137.8 338,137.8 338,139.4 339,139.4 339,144.9 340,144.9 340,149.8 341,149.8 341,147.5 342,147.5 342,141.3 343,141.3 343,141.3 344,141.3 344,143.5 345,143.5 345,147.8 346,147.8 346,147.6 347,147.6 347,147.6 348,147.6 348,138.7 349,138.7 349,117.4 350,117.4 350,97.5 351,97.5 351,94 352,94 352,121 353,121 353,138.7 354,138.7 354,150.9 355,150.9 355,151.8 356,151.8 356,152.8 357,152.8 357,152.4 358,152.4 358,152.4 359,152.4 359,141 360,141 360,126.5 361,126.5 361,114 362,114 362,110.5 363,110.5 363,129 364,129 364,141 365,141 365,152 366,152 366,151.5 367,151.5 367,151.5 368,151.5 368,151.6 369,151.6 369,151.1 370,151.1 370,150.7 371,150.7 371,150.3 372,150.3 372,150.2 373,150.2 373,151 374,151 374,153 375,153 375,153.9 376,153.9 376,153.2 377,153.2 377,152.7 378,152.7 378,152.7 379,152.7 379,153.6 380,153.6 380,151.7 381,151.7 381,150.4 382,150.4 382,149.3 383,149.3 383,149.2 384,149.2 384,149.4 385,149.4 385,150 386,150 386,150.4 387,150.4 387,147.6 388,147.6 388,146 389,146 389,146 390,146 390,146.3 391,146.3 391,146.7 392,146.7 392,148.8 393,148.8 393,149.2 394,149.2 394,144.4 395,144.4 395,140.4 396,140.4 396,140.4 397,140.4 397,143.4 398,143.4 398,143.9 399,143.9 399,142.2 400,142.2 400,142.3 401,142.3 401,147.2 402,147.2 402,139 403,139 403,138 404,138 404,140.6 405,140.6 405,147.5 406,147.5 406,151.1 407,151.1 407,152 408,152 408,150.4 409,150.4 409,143.6 410,143.6 410,140.8 411,140.8 411,140.9 412,140.9 412,141.7 413,141.7 413,143.6 414,143.6 414,146.2 415,146.2 415,141.6 416,141.6 416,141.6 417,141.6 417,145.5 418,145.5 418,144.9 419,144.9 419,141.6 420,141.6 420,141.6 421,141.6 421,148.3 422,148.3 422,154.2 423,154.2 423,153.9 424,153.9 424,152.4 425,152.4 425,150.9 426,150.9 426,148.3 427,148.3 427,140.8 428,140.8 428,136 429,136 429,136 430,136 430,145 431,145 431,149.5 432,149.5 432,148.4 433,148.4 433,149 434,149 434,146 435,146 435,138 436,138 436,138 437,138 437,142.3 438,142.3 438,149.9 439,149.9 439,151.2 440,151.2 440,149.8 441,149.8 441,149.2 442,149.2 442,149.2 443,149.2 443,149.2 444,149.2 444,149.7 445,149.7 445,151.2 446,151.2 446,152.5 447,152.5 447,152.7 448,152.7 448,151.5 449,151.5 449,149.8 450,149.8 450,149 451,149 451,149 452,149 452,151.4 453,151.4 453,152.3 454,152.3 454,148.5 455,148.5 455,144.2 456,144.2 456,144.2 457,144.2 457,146.9 458,146.9 458,151.9 459,151.9 459,150.3 460,150.3 460,148.8 461,148.8 461,148.1 462,148.1 462,148.1 463,148.1 463,149.9 464,149.9 464,150.9 465,150.9 465,147.7 466,147.7 466,144.5 467,144.5 467,144.5 468,144.5 468,147.1 469,147.1 469,151.8 470,151.8 470,153 471,153 471,150 472,150 472,148.8 473,148.8 473,149 474,149 474,148.9 475,148.9 475,143.2 476,143.2 476,143 477,143 477,145.2 478,145.2 478,149.9 479,149.9 479,150.8 480,150.8 480,150.8 481,150.8 481,151.4 482,151.4 482,147.2 483,147.2 483,145.8 484,145.8 484,146.5 485,146.5 485,150.7 486,150.7 486,147.5 487,147.5 487,147.5 488,147.5 488,149.4 489,149.4 489,145.5 490,145.5 490,141.1 491,141.1 491,141.1 492,141.1 492,144.1 493,144.1 493,137.7 494,137.7 494,136 495,136 495,138 496,138 496,146.2 497,146.2 497,148.3 498,148.3 498,148.3 499,148.3 499,150.3 500,150.3 500,153.5 501,153.5 501,153.8 502,153.8 502,152.4 503,152.4 503,151.1 504,151.1 504,149.9 505,149.9 505,149.6 506,149.6 506,150.3 507,150.3 507,152.7 508,152.7 508,153 509,153 509,151.8 510,151.8 510,149.8 511,149.8 511,138.9 512,138.9 512,118.2 513,118.2 513,99 514,99 514,95.5 515,95.5 515,121.8 516,121.8 516,138.9 517,138.9 517,140.4 518,140.4 518,140.4 519,140.4 519,144.1 520,144.1 520,150.8 521,150.8 521,151.6 522,151.6 522,150.6 523,150.6 523,149.9 524,149.9 524,149.2 525,149.2 525,149.1 526,149.1 526,149.4 527,149.4 527,150.5 528,150.5 528,151.4 529,151.4 529,150 530,150 530,148.7 531,148.7 531,148.7 532,148.7 532,149.9 533,149.9 533,147.6 534,147.6 534,146.6 535,146.6 535,146.7 536,146.7 536,144.1 537,144.1 537,139 538,139 538,139 539,139 539,142.5 540,142.5 540,149.7 541,149.7 541,147.9 542,147.9 542,145.4 543,145.4 543,144.2 544,144.2 544,144.3 545,144.3 545,148.8 546,148.8 546,152.4 547,152.4 547,142.5 548,142.5 548,130.5 549,130.5 549,130.5 550,130.5 550,133.6 551,133.6 551,139.3 552,139.3 552,145.1 553,145.1 553,142.8 554,142.8 554,140.3 555,140.3 555,140.6 556,140.6 556,143.7 557,143.7 557,146.6 558,146.6 558,148.8 559,148.8 559,150.9 560,150.9 560,151.9 561,151.9 561,150.9 562,150.9 562,150.9 563,150.9 563,151.6 564,151.6 564,149.4 565,149.4 565,148.6 566,148.6 566,148.6 567,148.6 567,148.4 568,148.4 568,147.9 569,147.9 569,147.9 570,147.9 570,149.1 571,149.1 571,150.6 572,150.6 572,149.7 573,149.7 573,149.7 574,149.7 574,151.7 575,151.7 575,153.3 576,153.3 576,147.2 577,147.2 577,138.9 578,138.9 578,138 579,138 579,140 580,140 580,145.1 581,145.1 581,149 582,149 582,150.8 583,150.8 583,150 584,150 584,150 585,150 585,150.3 586,150.3 586,150.7 587,150.7 587,151.9 588,151.9 588,152 589,152 589,148 590,148 590,144.4 591,144.4 591,144.4 592,144.4 592,147.3 593,147.3 593,151.9 594,151.9 594,153 595,153 595,153.3 596,153.3 596,153.4 597,153.4 597,153.6 598,153.6 598,154.7 599,154.7 599,153.6 600,153.6 600,151.5 601,151.5 601,149.9 602,149.9 602,149.9 603,149.9 603,150.9 604,150.9 604,152.4 605,152.4 605,153.3 606,153.3 606,153.1 607,153.1 607,150.7 608,150.7 608,147.7 609,147.7 609,147.4 610,147.4 610,148.4 611,148.4 611,150.7 612,150.7 612,151.7 613,151.7 613,151.7 614,151.7 614,152.2 615,152.2 615,152 616,152 616,151.6 617,151.6 617,151.2 618,151.2 618,150.5 619,150.5 619,149.6 620,149.6 620,149.6 621,149.6 621,150.7 622,150.7 622,152.4 623,152.4 623,151.6 624,151.6 624,151.3 625,151.3 625,148.2 626,148.2 626,142.6 627,142.6 627,140.7 628,140.7 628,142.3 629,142.3 629,150.9 630,150.9 630,152.7 631,152.7 631,152.7 632,152.7 632,153 633,153 633,152.8 634,152.8 634,152.3 635,152.3 635,152.3 636,152.3 636,151.4 637,151.4 637,146.6 638,146.6 638,144 639,144 639,142.2 640,142.2 640,142.1 641,142.1 641,144.5 642,144.5 642,150.1 643,150.1 643,151.2 644,151.2 644,151.2 645,151.2 645,151.9 646,151.9 646,151.8 647,151.8 647,151.5 648,151.5 648,151.7 649,151.7 649,153.7 650,153.7 650,142.4 651,142.4 651,132 652,132 652,124 653,124 653,120.5 654,120.5 654,133.8 655,133.8 655,142.4 656,142.4 656,150.7 657,150.7 657,145 658,145 658,143.2 659,143.2 659,143.1 660,143.1 660,139.9 661,139.9 661,122.1 662,122.1 662,106 663,106 663,102.5 664,102.5 664,125.1 665,125.1 665,139.9 666,139.9 666,140.9 667,140.9 667,141.1 668,141.1 668,141 669,141 669,141 670,141 670,141.4 671,141.4 671,143.1 672,143.1 672,145.7 673,145.7 673,149.6 674,149.6 674,151 675,151 675,146.6 676,146.6 676,144.2 677,144.2 677,144.2 678,144.2 678,147.6 679,147.6 679,150.3 680,150.3 680,150.2 681,150.2 681,150.3 682,150.3 682,150.4 683,150.4 683,150.5 684,150.5 684,148.5 685,148.5 685,147.2 686,147.2 686,147.2 687,147.2 687,148.8 688,148.8 688,142 689,142 689,140 690,140 690,141.3 691,141.3 691,147.6 692,147.6 692,148.5 693,148.5 693,146.6 694,146.6 694,145.1 695,145.1 695,145.1 696,145.1 696,146.5 697,146.5 697,148.3 698,148.3 698,150.5 699,150.5 699,151 700,151 700,150 701,150 701,149 702,149 702,133.9 703,133.9 703,98.4 704,98.4 704,63 705,63 705,59.5 706,59.5 706,104.5 707,104.5 707,133.9 708,133.9 708,152.9 709,152.9 709,152.6 710,152.6 710,151.8 711,151.8 711,150.1 712,150.1 712,148.2 713,148.2 713,148.2 714,148.2 714,149.6 715,149.6 715,143.3 716,143.3 716,138 717,138 717,138 718,138 718,142.4 719,142.4 719,147.3 720,147.3 720,148.7 721,148.7 721,150.1 722,150.1 722,151.2 723,151.2 723,151.5 724,151.5 724,151.3 725,151.3 725,151.2 726,151.2 726,151.2 727,151.2 727,197"/>
<polygon fill="#c6a206" points="181,197 181,187.8 182,187.8 182,188.1 183,188.1 183,188.3 184,188.3 184,187.8 185,187.8 185,186.1 186,186.1 186,185.1 187,185.1 187,186.2 188,186.2 188,187.5 189,187.5 189,185.9 190,185.9 190,185.6 191,185.6 191,186.7 192,186.7 192,187.6 193,187.6 193,187.4 194,187.4 194,184.2 195,184.2 195,182 196,182 196,183.8 197,183.8 197,187.2 198,187.2 198,188 199,188 199,187.9 200,187.9 200,187.9 201,187.9 201,185.6 202,185.6 202,183 203,183 203,183.4 204,183.4 204,185 205,185 205,186.4 206,186.4 206,187.4 207,187.4 207,188 208,188 208,188.3 209,188.3 209,188.2 210,188.2 210,186.5 211,186.5 211,184.2 212,184.2 212,184.2 213,184.2 213,186.3 214,186.3 214,187.8 215,187.8 215,188 216,188 216,187.9 217,187.9 217,187 218,187 218,185 219,185 219,184.3 220,184.3 220,185.8 221,185.8 221,187.2 222,187.2 222,186.6 223,186.6 223,183.9 224,183.9 224,181.5 225,181.5 225,182.8 226,182.8 226,186.4 227,186.4 227,185.7 228,185.7 228,184.7 229,184.7 229,184.5 230,184.5 230,183.9 231,183.9 231,183.1 232,183.1 232,183 233,183 233,183.5 234,183.5 234,183.2 235,183.2 235,181.7 236,181.7 236,177.1 237,177.1 237,174.3 238,174.3 238,177 239,177 239,181.4 240,181.4 240,184.7 241,184.7 241,187.1 242,187.1 242,186 243,186 243,184.3 244,184.3 244,181.7 245,181.7 245,172 246,172 246,165.1 247,165.1 247,166.1 248,166.1 248,168.3 249,168.3 249,173.9 250,173.9 250,181.3 251,181.3 251,183.9 252,183.9 252,179.3 253,179.3 253,171.8 254,171.8 254,172.6 255,172.6 255,177.3 256,177.3 256,180.6 257,180.6 257,181.4 258,181.4 258,180.3 259,180.3 259,179.8 260,179.8 260,182.2 261,182.2 261,185.1 262,185.1 262,184 263,184 263,183.5 264,183.5 264,182.6 265,182.6 265,173.5 266,173.5 266,166.5 267,166.5 267,170.2 268,170.2 268,178.7 269,178.7 269,182.9 270,182.9 270,184.3 271,184.3 271,184.9 272,184.9 272,183.5 273,183.5 273,181.1 274,181.1 274,181.2 275,181.2 275,183 276,183 276,184.8 277,184.8 277,186.8 278,186.8 278,188 279,188 279,188.2 280,188.2 280,187.9 281,187.9 281,187.8 282,187.8 282,188 283,188 283,187.9 284,187.9 284,187.7 285,187.7 285,187.7 286,187.7 286,187.8 287,187.8 287,185.3 288,185.3 288,183.7 289,183.7 289,185.1 290,185.1 290,187.6 291,187.6 291,188.1 292,188.1 292,185.1 293,185.1 293,181 294,181 294,180.9 295,180.9 295,184.9 296,184.9 296,188 297,188 297,188.1 298,188.1 298,188.1 299,188.1 299,188.1 300,188.1 300,188.1 301,188.1 301,188.3 302,188.3 302,188.2 303,188.2 303,188.2 304,188.2 304,188.3 305,188.3 305,187.9 306,187.9 306,187.1 307,187.1 307,183.2 308,183.2 308,180.4 309,180.4 309,182.5 310,182.5 310,186.6 311,186.6 311,187.9 312,187.9 312,188 313,188 313,188.1 314,188.1 314,188.2 315,188.2 315,188.2 316,188.2 316,184.2 317,184.2 317,181 318,181 318,182.6 319,182.6 319,186.5 320,186.5 320,188.2 321,188.2 321,188.3 322,188.3 322,188.3 323,188.3 323,188.3 324,188.3 324,188.2 325,188.2 325,188.2 326,188.2 326,188.2 327,188.2 327,187.9 328,187.9 328,186.8 329,186.8 329,183.7 330,183.7 330,181.9 331,181.9 331,184 332,184 332,187.4 333,187.4 333,188 334,188 334,188 335,188 335,188.1 336,188.1 336,188.1 337,188.1 337,188.1 338,188.1 338,187.9 339,187.9 339,187.8 340,187.8 340,188 341,188 341,188.3 342,188.3 342,188.1 343,188.1 343,184.5 344,184.5 344,179.3 345,179.3 345,178.8 346,178.8 346,183.8 347,183.8 347,187.7 348,187.7 348,187.8 349,187.8 349,187.9 350,187.9 350,187.9 351,187.9 351,187.8 352,187.8 352,187.8 353,187.8 353,187.9 354,187.9 354,188 355,188 355,188 356,188 356,186.2 357,186.2 357,184.4 358,184.4 358,185 359,185 359,187 360,187 360,186.2 361,186.2 361,185.5 362,185.5 362,185.6 363,185.6 363,184.2 364,184.2 364,181.5 365,181.5 365,181 366,181 366,184.8 367,184.8 367,188 368,188 368,188.1 369,188.1 369,186.9 370,186.9 370,186 371,186 371,186.6 372,186.6 372,187.5 373,187.5 373,188 374,188 374,188.2 375,188.2 375,188.3 376,188.3 376,188.1 377,188.1 377,187.9 378,187.9 378,187.8 379,187.8 379,187.8 380,187.8 380,187.9 381,187.9 381,188.1 382,188.1 382,188.1 383,188.1 383,186.2 384,186.2 384,182.8 385,182.8 385,182 386,182 386,185 387,185 387,187.8 388,187.8 388,187.9 389,187.9 389,184.3 390,184.3 390,181.6 391,181.6 391,183.4 392,183.4 392,187 393,187 393,188.1 394,188.1 394,188.1 395,188.1 395,188.1 396,188.1 396,188 397,188 397,187.9 398,187.9 398,187.9 399,187.9 399,188.1 400,188.1 400,188.2 401,188.2 401,188.2 402,188.2 402,188.3 403,188.3 403,188.2 404,188.2 404,187.8 405,187.8 405,187.7 406,187.7 406,187.8 407,187.8 407,187.9 408,187.9 408,187.9 409,187.9 409,188 410,188 410,188.2 411,188.2 411,188.1 412,188.1 412,188 413,188 413,188 414,188 414,188 415,188 415,187.9 416,187.9 416,187.9 417,187.9 417,188.1 418,188.1 418,188.1 419,188.1 419,188 420,188 420,188 421,188 421,187.7 422,187.7 422,186.7 423,186.7 423,186.1 424,186.1 424,186.8 425,186.8 425,186.9 426,186.9 426,185.1 427,185.1 427,183.1 428,183.1 428,181 429,181 429,181.8 430,181.8 430,185.4 431,185.4 431,187.7 432,187.7 432,187.8 433,187.8 433,187.9 434,187.9 434,188 435,188 435,188.1 436,188.1 436,187.2 437,187.2 437,185.8 438,185.8 438,185.7 439,185.7 439,186.9 440,186.9 440,187.9 441,187.9 441,188.1 442,188.1 442,187.8 443,187.8 443,187.6 444,187.6 444,187.7 445,187.7 445,187.8 446,187.8 446,187.6 447,187.6 447,187.6 448,187.6 448,187.6 449,187.6 449,187.7 450,187.7 450,188 451,188 451,185.7 452,185.7 452,183.8 453,183.8 453,182.6 454,182.6 454,182 455,182 455,184.2 456,184.2 456,187.2 457,187.2 457,188 458,188 458,188 459,188 459,187.6 460,187.6 460,187.6 461,187.6 461,187.8 462,187.8 462,187.8 463,187.8 463,187.9 464,187.9 464,187.9 465,187.9 465,188 466,188 466,188.1 467,188.1 467,188.1 468,188.1 468,187.9 469,187.9 469,187.9 470,187.9 470,188.1 471,188.1 471,188 472,188 472,187.9 473,187.9 473,187.9 474,187.9 474,188 475,188 475,187.8 476,187.8 476,187.8 477,187.8 477,187.8 478,187.8 478,187.8 479,187.8 479,187.9 480,187.9 480,188 481,188 481,188 482,188 482,188 483,188 483,188 484,188 484,187.8 485,187.8 485,187.8 486,187.8 486,187.8 487,187.8 487,187.9 488,187.9 488,188 489,188 489,187.9 490,187.9 490,187.6 491,187.6 491,185.6 492,185.6 492,184 493,184 493,184.9 494,184.9 494,187.1 495,187.1 495,187.8 496,187.8 496,186.3 497,186.3 497,183.7 498,183.7 498,183 499,183 499,185.5 500,185.5 500,187.8 501,187.8 501,188.1 502,188.1 502,188.1 503,188.1 503,187.9 504,187.9 504,187.8 505,187.8 505,187.7 506,187.7 506,187.7 507,187.7 507,187.8 508,187.8 508,188 509,188 509,188.1 510,188.1 510,188 511,188 511,188 512,188 512,187.8 513,187.8 513,186.4 514,186.4 514,185.5 515,185.5 515,186.2 516,186.2 516,187.5 517,187.5 517,188 518,188 518,188.1 519,188.1 519,188.1 520,188.1 520,188.1 521,188.1 521,187.8 522,187.8 522,182.5 523,182.5 523,178.4 524,178.4 524,180.6 525,180.6 525,186 526,186 526,187.8 527,187.8 527,187.7 528,187.7 528,187.9 529,187.9 529,187.9 530,187.9 530,187.7 531,187.7 531,187.7 532,187.7 532,187.7 533,187.7 533,183.6 534,183.6 534,180.7 535,180.7 535,181.7 536,181.7 536,183.4 537,183.4 537,180.9 538,180.9 538,180 539,180 539,183.7 540,183.7 540,187.8 541,187.8 541,187.7 542,187.7 542,187.7 543,187.7 543,187.8 544,187.8 544,187.8 545,187.8 545,187.8 546,187.8 546,187.7 547,187.7 547,185.9 548,185.9 548,182.5 549,182.5 549,181.5 550,181.5 550,184.7 551,184.7 551,187.9 552,187.9 552,188 553,188 553,188.1 554,188.1 554,188.1 555,188.1 555,188.2 556,188.2 556,187.4 557,187.4 557,185.2 558,185.2 558,184.3 559,184.3 559,185.8 560,185.8 560,186.8 561,186.8 561,185.7 562,185.7 562,185.8 563,185.8 563,187 564,187 564,187.8 565,187.8 565,187.9 566,187.9 566,187.9 567,187.9 567,188.1 568,188.1 568,188.2 569,188.2 569,188.2 570,188.2 570,187.9 571,187.9 571,187.8 572,187.8 572,188.1 573,188.1 573,188.1 574,188.1 574,187.7 575,187.7 575,186.1 576,186.1 576,185.2 577,185.2 577,186 578,186 578,187.4 579,187.4 579,188 580,188 580,188.1 581,188.1 581,187.8 582,187.8 582,187.8 583,187.8 583,188 584,188 584,188.1 585,188.1 585,188.1 586,188.1 586,187.8 587,187.8 587,187.6 588,187.6 588,187.6 589,187.6 589,187.6 590,187.6 590,187.6 591,187.6 591,187.6 592,187.6 592,187.9 593,187.9 593,188.2 594,188.2 594,188.2 595,188.2 595,188.1 596,188.1 596,187.9 597,187.9 597,188 598,188 598,187.9 599,187.9 599,187.7 600,187.7 600,187.6 601,187.6 601,187.9 602,187.9 602,188.1 603,188.1 603,187.9 604,187.9 604,187.7 605,187.7 605,187.6 606,187.6 606,187.7 607,187.7 607,187.8 608,187.8 608,187.9 609,187.9 609,188 610,188 610,188 611,188 611,186.6 612,186.6 612,184.4 613,184.4 613,184.4 614,184.4 614,186.3 615,186.3 615,185.9 616,185.9 616,184.7 617,184.7 617,185.5 618,185.5 618,186.7 619,186.7 619,184 620,184 620,183 621,183 621,184.4 622,184.4 622,186.1 623,186.1 623,187.1 624,187.1 624,187.9 625,187.9 625,188.1 626,188.1 626,188.2 627,188.2 627,187.3 628,187.3 628,184.4 629,184.4 629,183 630,183 630,184.8 631,184.8 631,187.1 632,187.1 632,186.1 633,186.1 633,186 634,186 634,187.1 635,187.1 635,187.9 636,187.9 636,188 637,188 637,188.2 638,188.2 638,188.2 639,188.2 639,187.9 640,187.9 640,187.8 641,187.8 641,187.8 642,187.8 642,187.9 643,187.9 643,188.2 644,188.2 644,182.8 645,182.8 645,177.3 646,177.3 646,179.1 647,179.1 647,185.2 648,185.2 648,188 649,188 649,187.9 650,187.9 650,187.8 651,187.8 651,187.8 652,187.8 652,187.9 653,187.9 653,187.9 654,187.9 654,188 655,188 655,187.8 656,187.8 656,187.6 657,187.6 657,187.7 658,187.7 658,187.7 659,187.7 659,187.9 660,187.9 660,188.1 661,188.1 661,188.1 662,188.1 662,188.1 663,188.1 663,188 664,188 664,188 665,188 665,188.2 666,188.2 666,187.9 667,187.9 667,187.6 668,187.6 668,187.8 669,187.8 669,188.1 670,188.1 670,188.2 671,188.2 671,188.2 672,188.2 672,188.1 673,188.1 673,188.1 674,188.1 674,188.1 675,188.1 675,188.1 676,188.1 676,188.1 677,188.1 677,188.1 678,188.1 678,187.5 679,187.5 679,184.8 680,184.8 680,183.4 681,183.4 681,185.2 682,185.2 682,187.9 683,187.9 683,188.1 684,188.1 684,188.1 685,188.1 685,188.1 686,188.1 686,188.1 687,188.1 687,188 688,188 688,186.2 689,186.2 689,185 690,185 690,185.9 691,185.9 691,187.4 692,187.4 692,188 693,188 693,188 694,188 694,187.7 695,187.7 695,187.7 696,187.7 696,188 697,188 697,188 698,188 698,187.7 699,187.7 699,187.7 700,187.7 700,187.8 701,187.8 701,187.9 702,187.9 702,187.9 703,187.9 703,188 704,188 704,188 705,188 705,188 706,188 706,187.8 707,187.8 707,187.6 708,187.6 708,187.7 709,187.7 709,187.9 710,187.9 710,188 711,188 711,188 712,188 712,187.9 713,187.9 713,187.9 714,187.9 714,188 715,188 715,186.9 716,186.9 716,185.2 717,185.2 717,181.2 718,181.2 718,178 719,178 719,180.2 720,180.2 720,185.7 721,185.7 721,187.9 722,187.9 722,187.8 723,187.8 723,187.9 724,187.9 724,188.1 725,188.1 725,188.1 726,188.1 726,188.2 727,188.2 727,197"/>
<polygon fill="#882907" points="181,197 181,191.3 182,191.3 182,191.3 183,191.3 183,191.3 184,191.3 184,190.9 185,190.9 185,189.4 186,189.4 186,188.6 187,188.6 187,189.5 188,189.5 188,190.6 189,190.6 189,189.4 190,189.4 190,189.1 191,189.1 191,190.3 192,190.3 192,191.3 193,191.3 193,191.3 194,191.3 194,191.3 195,191.3 195,191.3 196,191.3 196,191.3 197,191.3 197,191.3 198,191.3 198,191.3 199,191.3 199,191.3 200,191.3 200,191.3 201,191.3 201,191.3 202,191.3 202,191.3 203,191.3 203,190.1 204,190.1 204,189.2 205,189.2 205,189.7 206,189.7 206,190.8 207,190.8 207,191.3 208,191.3 208,191.3 209,191.3 209,191.3 210,191.3 210,191.3 211,191.3 211,191.3 212,191.3 212,191.3 213,191.3 213,191.3 214,191.3 214,191.3 215,191.3 215,191.3 216,191.3 216,191.3 217,191.3 217,191.3 218,191.3 218,191.3 219,191.3 219,191.3 220,191.3 220,191.3 221,191.3 221,190.6 222,190.6 222,189.7 223,189.7 223,187.1 224,187.1 224,184.9 225,184.9 225,186.1 226,186.1 226,189.6 227,189.6 227,189 228,189 228,188.1 229,188.1 229,187.7 230,187.7 230,187.6 231,187.6 231,187.7 232,187.7 232,187.3 233,187.3 233,186.8 234,186.8 234,186.1 235,186.1 235,184.7 236,184.7 236,180.5 237,180.5 237,178 238,178 238,180.6 239,180.6 239,185 240,185 240,188.1 241,188.1 241,190.4 242,190.4 242,189.7 243,189.7 243,188 244,188 244,185.4 245,185.4 245,175.5 246,175.5 246,168.5 247,168.5 247,169.6 248,169.6 248,171.8 249,171.8 249,177.3 250,177.3 250,184.7 251,184.7 251,187.2 252,187.2 252,182.7 253,182.7 253,175.2 254,175.2 254,175.9 255,175.9 255,180.5 256,180.5 256,184.2 257,184.2 257,186.5 258,186.5 258,184.1 259,184.1 259,182.9 260,182.9 260,185.2 261,185.2 261,188.2 262,188.2 262,187.4 263,187.4 263,186.9 264,186.9 264,186 265,186 265,177 266,177 266,170 267,170 267,173.7 268,173.7 268,182.1 269,182.1 269,186.4 270,186.4 270,187.9 271,187.9 271,188.2 272,188.2 272,188.3 273,188.3 273,188.7 274,188.7 274,188.3 275,188.3 275,187.5 276,187.5 276,188.2 277,188.2 277,190.3 278,190.3 278,191.3 279,191.3 279,191.3 280,191.3 280,191.3 281,191.3 281,191.3 282,191.3 282,191.3 283,191.3 283,191.3 284,191.3 284,191.3 285,191.3 285,191.3 286,191.3 286,190.9 287,190.9 287,188.8 288,188.8 288,187.4 289,187.4 289,188.6 290,188.6 290,190.7 291,190.7 291,191.3 292,191.3 292,190.5 293,190.5 293,189.4 294,189.4 294,189.4 295,189.4 295,190.5 296,190.5 296,191.3 297,191.3 297,191.3 298,191.3 298,191.3 299,191.3 299,191.3 300,191.3 300,191.3 301,191.3 301,191.3 302,191.3 302,191.3 303,191.3 303,191.3 304,191.3 304,191.3 305,191.3 305,191.3 306,191.3 306,190.8 307,190.8 307,186.8 308,186.8 308,184 309,184 309,186 310,186 310,190 311,190 311,191.3 312,191.3 312,191.3 313,191.3 313,191.3 314,191.3 314,191.3 315,191.3 315,191.3 316,191.3 316,190.3 317,190.3 317,189.5 318,189.5 318,189.9 319,189.9 319,190.9 320,190.9 320,191.3 321,191.3 321,191.3 322,191.3 322,191.3 323,191.3 323,191.3 324,191.3 324,191.3 325,191.3 325,191.3 326,191.3 326,191.3 327,191.3 327,191.3 328,191.3 328,190.4 329,190.4 329,187 330,187 330,185 331,185 331,187.2 332,187.2 332,190.7 333,190.7 333,191.3 334,191.3 334,191.3 335,191.3 335,191.3 336,191.3 336,191.3 337,191.3 337,191.3 338,191.3 338,191.3 339,191.3 339,191.3 340,191.3 340,191.3 341,191.3 341,191.3 342,191.3 342,191.3 343,191.3 343,189 344,189 344,185.5 345,185.5 345,185.2 346,185.2 346,188.6 347,188.6 347,191.3 348,191.3 348,191.3 349,191.3 349,191.3 350,191.3 350,191.3 351,191.3 351,191.3 352,191.3 352,191.3 353,191.3 353,191.3 354,191.3 354,191.3 355,191.3 355,191.3 356,191.3 356,189.4 357,189.4 357,187.6 358,187.6 358,188.2 359,188.2 359,190.2 360,190.2 360,189.8 361,189.8 361,189.2 362,189.2 362,189.9 363,189.9 363,191.1 364,191.1 364,191.3 365,191.3 365,191.3 366,191.3 366,191.3 367,191.3 367,191.3 368,191.3 368,191.1 369,191.1 369,189.9 370,189.9 370,189 371,189 371,189.7 372,189.7 372,190.9 373,190.9 373,191.3 374,191.3 374,191.3 375,191.3 375,191.3 376,191.3 376,191.3 377,191.3 377,191.3 378,191.3 378,191.3 379,191.3 379,191.3 380,191.3 380,191.3 381,191.3 381,191.3 382,191.3 382,191.3 383,191.3 383,191.3 384,191.3 384,191.3 385,191.3 385,191.3 386,191.3 386,191.3 387,191.3 387,191.3 388,191.3 388,190.9 389,190.9 389,187.5 390,187.5 390,185 391,185 391,186.7 392,186.7 392,190.1 393,190.1 393,191.3 394,191.3 394,191.3 395,191.3 395,191.3 396,191.3 396,191.3 397,191.3 397,191.3 398,191.3 398,191.3 399,191.3 399,191.3 400,191.3 400,191.3 401,191.3 401,191.3 402,191.3 402,191.3 403,191.3 403,191.3 404,191.3 404,191.3 405,191.3 405,191.3 406,191.3 406,191.3 407,191.3 407,191.3 408,191.3 408,191.3 409,191.3 409,191.3 410,191.3 410,191.3 411,191.3 411,191.3 412,191.3 412,191.3 413,191.3 413,191.3 414,191.3 414,191.3 415,191.3 415,191.3 416,191.3 416,191.3 417,191.3 417,191.3 418,191.3 418,191.3 419,191.3 419,191.3 420,191.3 420,191.3 421,191.3 421,191 422,191 422,190 423,190 423,189.5 424,189.5 424,190.2 425,190.2 425,190.2 426,190.2 426,188.4 427,188.4 427,186.7 428,186.7 428,185 429,185 429,185.7 430,185.7 430,189.2 431,189.2 431,191.3 432,191.3 432,191.3 433,191.3 433,191.3 434,191.3 434,191.3 435,191.3 435,191.3 436,191.3 436,191.3 437,191.3 437,191.3 438,191.3 438,191.3 439,191.3 439,191.3 440,191.3 440,191.3 441,191.3 441,191.3 442,191.3 442,191.3 443,191.3 443,191.3 444,191.3 444,191.3 445,191.3 445,191.3 446,191.3 446,191.3 447,191.3 447,191.3 448,191.3 448,191.3 449,191.3 449,191.3 450,191.3 450,191 451,191 451,189 452,189 452,187.1 453,187.1 453,185.7 454,185.7 454,185 455,185 455,187.4 456,187.4 456,190.8 457,190.8 457,191.3 458,191.3 458,191.3 459,191.3 459,191.3 460,191.3 460,191.3 461,191.3 461,191.3 462,191.3 462,191.3 463,191.3 463,191.3 464,191.3 464,191.3 465,191.3 465,191.3 466,191.3 466,191.3 467,191.3 467,191.3 468,191.3 468,191.3 469,191.3 469,191.3 470,191.3 470,191.3 471,191.3 471,191.3 472,191.3 472,191.3 473,191.3 473,191.3 474,191.3 474,191.3 475,191.3 475,191.3 476,191.3 476,191.3 477,191.3 477,191.3 478,191.3 478,191.3 479,191.3 479,191.3 480,191.3 480,191.3 481,191.3 481,191.3 482,191.3 482,191.3 483,191.3 483,191.3 484,191.3 484,191.3 485,191.3 485,191.3 486,191.3 486,191.3 487,191.3 487,191.3 488,191.3 488,191.3 489,191.3 489,191.3 490,191.3 490,191.3 491,191.3 491,191.3 492,191.3 492,191.3 493,191.3 493,191.3 494,191.3 494,191.3 495,191.3 495,191.3 496,191.3 496,191.3 497,191.3 497,191.3 498,191.3 498,191.3 499,191.3 499,191.3 500,191.3 500,191.3 501,191.3 501,191.3 502,191.3 502,191.3 503,191.3 503,191.3 504,191.3 504,191.3 505,191.3 505,191.3 506,191.3 506,191.3 507,191.3 507,191.3 508,191.3 508,191.3 509,191.3 509,191.3 510,191.3 510,191.3 511,191.3 511,191.3 512,191.3 512,191.1 513,191.1 513,189.8 514,189.8 514,188.9 515,188.9 515,189.6 516,189.6 516,190.9 517,190.9 517,191.3 518,191.3 518,191.3 519,191.3 519,191.3 520,191.3 520,191.3 521,191.3 521,191 522,191 522,185.7 523,185.7 523,181.5 524,181.5 524,183.8 525,183.8 525,189.2 526,189.2 526,191.3 527,191.3 527,191.3 528,191.3 528,191.3 529,191.3 529,191.3 530,191.3 530,191.3 531,191.3 531,191.3 532,191.3 532,190.9 533,190.9 533,186.9 534,186.9 534,184 535,184 535,185 536,185 536,186.4 537,186.4 537,183.9 538,183.9 538,183 539,183 539,186.8 540,186.8 540,191.3 541,191.3 541,191.3 542,191.3 542,191.3 543,191.3 543,191.3 544,191.3 544,191.3 545,191.3 545,191.3 546,191.3 546,191.3 547,191.3 547,189.5 548,189.5 548,186 549,186 549,185 550,185 550,188.1 551,188.1 551,191.3 552,191.3 552,191.3 553,191.3 553,191.3 554,191.3 554,191.3 555,191.3 555,191.3 556,191.3 556,190.4 557,190.4 557,188.3 558,188.3 558,187.4 559,187.4 559,189.1 560,189.1 560,191.2 561,191.2 561,191.3 562,191.3 562,191.3 563,191.3 563,191.3 564,191.3 564,191.3 565,191.3 565,191.3 566,191.3 566,191.3 567,191.3 567,191.3 568,191.3 568,191.3 569,191.3 569,191.3 570,191.3 570,191.3 571,191.3 571,191.3 572,191.3 572,191.3 573,191.3 573,191.3 574,191.3 574,191 575,191 575,189.6 576,189.6 576,188.7 577,188.7 577,189.5 578,189.5 578,190.9 579,190.9 579,191.3 580,191.3 580,191.3 581,191.3 581,191.3 582,191.3 582,191.3 583,191.3 583,191.3 584,191.3 584,191.3 585,191.3 585,191.3 586,191.3 586,191.3 587,191.3 587,191.3 588,191.3 588,191.3 589,191.3 589,191.3 590,191.3 590,191.3 591,191.3 591,191.3 592,191.3 592,191.3 593,191.3 593,191.3 594,191.3 594,191.3 595,191.3 595,191.3 596,191.3 596,191.3 597,191.3 597,191.3 598,191.3 598,191.3 599,191.3 599,191.3 600,191.3 600,191.3 601,191.3 601,191.3 602,191.3 602,191.3 603,191.3 603,191.3 604,191.3 604,191.3 605,191.3 605,191.3 606,191.3 606,191.3 607,191.3 607,191.3 608,191.3 608,191.3 609,191.3 609,191.3 610,191.3 610,191.3 611,191.3 611,191.3 612,191.3 612,191.3 613,191.3 613,191.3 614,191.3 614,191.1 615,191.1 615,189.3 616,189.3 616,188 617,188 617,188.8 618,188.8 618,190.7 619,190.7 619,191.3 620,191.3 620,190.8 621,190.8 621,189.9 622,189.9 622,189.7 623,189.7 623,190.6 624,190.6 624,191.3 625,191.3 625,191.3 626,191.3 626,191.3 627,191.3 627,191.3 628,191.3 628,191.3 629,191.3 629,191.3 630,191.3 630,191.3 631,191.3 631,191.3 632,191.3 632,191.3 633,191.3 633,191.3 634,191.3 634,191.3 635,191.3 635,191.3 636,191.3 636,191.3 637,191.3 637,191.3 638,191.3 638,191.3 639,191.3 639,191.3 640,191.3 640,191.3 641,191.3 641,191.3 642,191.3 642,191.3 643,191.3 643,191.3 644,191.3 644,185.8 645,185.8 645,180.5 646,180.5 646,182.3 647,182.3 647,188.2 648,188.2 648,191.3 649,191.3 649,191.3 650,191.3 650,191.3 651,191.3 651,191.3 652,191.3 652,191.3 653,191.3 653,191.3 654,191.3 654,191.3 655,191.3 655,191.3 656,191.3 656,191.3 657,191.3 657,191.3 658,191.3 658,191.3 659,191.3 659,191.3 660,191.3 660,191.3 661,191.3 661,191.3 662,191.3 662,191.3 663,191.3 663,191.3 664,191.3 664,191.3 665,191.3 665,191.3 666,191.3 666,191.3 667,191.3 667,191.3 668,191.3 668,191.3 669,191.3 669,191.3 670,191.3 670,191.3 671,191.3 671,191.3 672,191.3 672,191.3 673,191.3 673,191.3 674,191.3 674,191.3 675,191.3 675,191.3 676,191.3 676,191.3 677,191.3 677,191.3 678,191.3 678,191.3 679,191.3 679,191.3 680,191.3 680,191.3 681,191.3 681,191.3 682,191.3 682,191.3 683,191.3 683,191.3 684,191.3 684,191.3 685,191.3 685,191.3 686,191.3 686,191.3 687,191.3 687,191.3 688,191.3 688,191.3 689,191.3 689,191.3 690,191.3 690,191.3 691,191.3 691,191.3 692,191.3 692,191.3 693,191.3 693,191.3 694,191.3 694,191.3 695,191.3 695,191.3 696,191.3 696,191.3 697,191.3 697,191.3 698,191.3 698,191.3 699,191.3 699,191.3 700,191.3 700,191.3 701,191.3 701,191.3 702,191.3 702,191.3 703,191.3 703,164 704,164 704,168 705,168 705,191.3 706,191.3 706,191.3 707,191.3 707,191.3 708,191.3 708,191.3 709,191.3 709,191.3 710,191.3 710,191.3 711,191.3 711,191.3 712,191.3 712,191.3 713,191.3 713,191.3 714,191.3 714,191.3 715,191.3 715,191.3 716,191.3 716,191.3 717,191.3 717,191.3 718,191.3 718,191.3 719,191.3 719,191.3 720,191.3 720,191.3 721,191.3 721,191.3 722,191.3 722,191.3 723,191.3 723,191.3 724,191.3 724,191.3 725,191.3 725,191.3 726,191.3 726,191.3 727,191.3 727,197"/>
 <rect x="179" y="197" width="551" height="1" fill="#141414"/>
 <rect x="179" y="327" width="551" height="1" fill="#141414"/>
 <rect x="728" y="44" width="1" height="153" fill="#808080"/>
 <!-- rendering lines -->
 <g fill="none" stroke-width="1" shape-rendering="auto">
  <path d="M181 209.8H727.5L729.5 325" stroke="#3f8a96"/>
  <path d="M181 209.2H309.6L311 204.8L312.4 209.2H727.5L729.5 325" stroke="#7b9e06" opacity="0.45"/>
  <path d="M309.4 209.3L311 204.6L312.6 209.3" stroke="#8a9a10" stroke-width="1.1"/>
  <path d="M181 219.5H727.5L729.5 325" stroke="#4a9aa0"/>
 </g>
 <!-- memory lines -->
 <g fill="none" shape-rendering="auto">
  <path d="M181 335.5H729" stroke="#7b8f10" stroke-width="1"/>
  <path d="M181 342H705" stroke="#2f5a70" stroke-width="2"/>
  <path d="M705 342L727 341.6L729 344" stroke="#34708c" stroke-width="1.3"/>
  <path d="M181 348H705" stroke="#7a4c18" stroke-width="2"/>
  <path d="M705 348L727 347.6L728.7 446" stroke="#b06a18" stroke-width="1.3"/>
  <path d="M728.7 446L729.2 482" stroke="#7a3010" stroke-width="1.3"/>
  <path d="M181 353.5H727L727.6 364" stroke="#4c98a4" stroke-width="1.1"/>
  <path d="M729 364.5V390" stroke="#8a9aa0" stroke-width="1" opacity="0.55"/>
  <path d="M181 358.6H727" stroke="#4a4516" stroke-width="1.6"/>
  <path d="M181 364L620 363.5H727L729.3 366.5L727.6 361" stroke="#c09a14" stroke-width="1"/>
  <path d="M181 481.5H241.1L243 441.5L244.9 481.5H376.6L378.5 441.5L380.4 481.5H527.3L529.2 441.5L531.1 481.5H677.5L679.4 441.5L681.3 481.5H727" stroke="#6e2a14" stroke-width="1"/>
 </g>
 <rect x="181" y="481" width="548" height="1" fill="#5a2a18"/>
 <rect x="181" y="482" width="548" height="1" fill="#3c180a"/>
 <rect x="180" y="482" width="1" height="1" fill="#0c0c0c"/>
 <!-- scrollbar -->
 <rect x="730" y="40" width="14" height="445" fill="#282827"/>
</svg>
<svg style="position:absolute;left:730px;top:43px" width="14" height="442">
 <path d="M4 7h8L8 2.6z" fill="#c8c8c8"/>
 <rect x="2.8" y="59" width="10.2" height="171" rx="5" fill="#5f5f5f"/>
</svg>
<span class="lab" style="left:185px;top:54px;width:92px;">10ms (100FPS)</span>
<span class="lab" style="left:185px;top:120px;width:85px;">5ms (200FPS)</span>

<div id="strip"></div>
<svg style="position:absolute;left:743px;top:0" width="13" height="485">
 <defs><linearGradient id="sk" gradientUnits="userSpaceOnUse" x1="1" x2="13" y1="0" y2="0"><stop offset="0" stop-color="#e2bea4"/><stop offset="0.08" stop-color="#e2bea4"/><stop offset="0.1" stop-color="#b99a84"/><stop offset="0.25" stop-color="#c4a48e"/><stop offset="0.5" stop-color="#cfae96"/><stop offset="1" stop-color="#dcb8a0"/></linearGradient>
 <linearGradient id="dk" x1="0" x2="0" y1="0" y2="1"><stop offset="0" stop-color="#2a1a18" stop-opacity="0"/><stop offset="1" stop-color="#2a1a18" stop-opacity="0.14"/></linearGradient>
 <linearGradient id="gr" x1="0" x2="1" y1="0" y2="0"><stop offset="0" stop-color="#383838"/><stop offset="1" stop-color="#484848"/></linearGradient></defs>
 <rect x="0" y="0" width="1" height="485" fill="#202222"/>
 <rect x="1" y="0" width="12" height="312" fill="url(#sk)"/>
 <rect x="1" y="140" width="12" height="172" fill="url(#dk)"/>
 <path d="M5.3 189.5L13 181" stroke="#c4a6a0" stroke-width="3" opacity="0.8"/>
 <path d="M1 194.5L8.5 193L13 192.4" stroke="#f0e4de" stroke-width="0.9" fill="none"/>
 <path d="M1 311L13 307.6V386H1z" fill="url(#gr)"/>
 <path d="M1 311L13 307.6" stroke="#e8e0dc" stroke-width="0.8"/>
 <rect x="1" y="386" width="12" height="99" fill="#2b2b2b"/>
 <rect x="1" y="407" width="12" height="21" fill="#444"/>
 <rect x="1" y="417" width="12" height="2" fill="#7a7a7a"/>
</svg>
</body></html>
